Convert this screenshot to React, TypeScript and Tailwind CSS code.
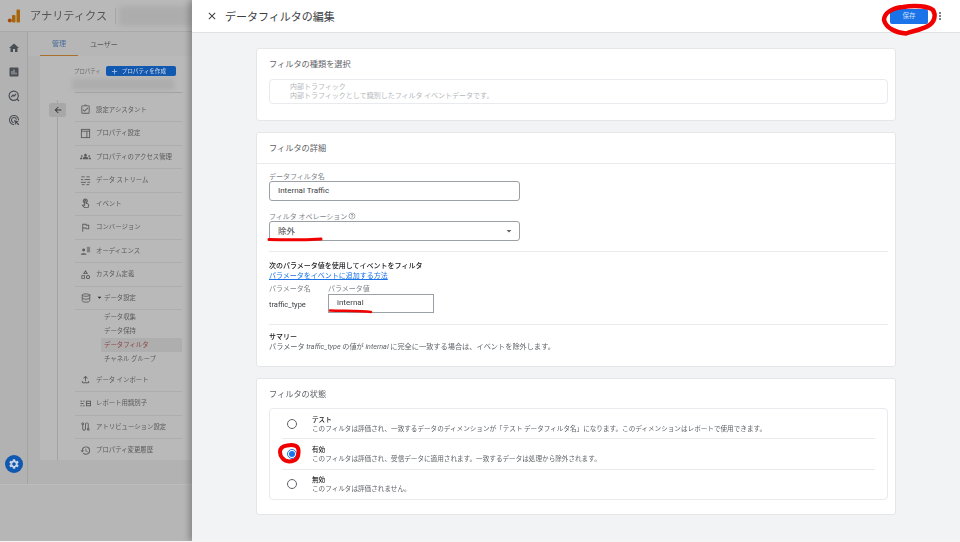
import type { ReactNode } from "react";
import { Database } from "lucide-react";
import {
  MdHome,
  MdInsertChart,
  MdOutlineAdsClick,
  MdOutlineAssignmentTurnedIn,
  MdGroups,
  MdOutlineTouchApp,
  MdOutlineFlag,
  MdOutlineCategory,
  MdOutlineFileUpload,
  MdOutlineRoute,
  MdHistory,
  MdArrowBack,
  MdSettings,
  MdClose,
  MdMoreVert,
  MdArrowDropDown,
  MdAdd,
  MdOutlineHelpOutline,
} from "react-icons/md";

const FONT = "font-['Noto_Sans_CJK_JP','Noto_Sans',sans-serif]";

type IconProps = { size?: number; className?: string };

// the GA nav glyphs that the icon packs don't carry
function SettingsBoxIcon({ size, className }: IconProps) {
  return (
    <svg width={size} height={size} viewBox="0 0 12 12" fill="none" stroke="currentColor" className={className}>
      <rect x="1.5" y="1.5" width="9" height="9" />
      <path d="M1.5 3.5H10.5M7.5 3.5V10.5" />
    </svg>
  );
}

function StreamIcon({ size, className }: IconProps) {
  return (
    <svg width={size} height={size} viewBox="0 0 12 12" fill="none" stroke="currentColor" className={className}>
      <path d="M1.5 2H5M7 2H10.5M1 5H3.5M5 5H11M1 8H6.5M8 8H11M2 10.5H5M7 10.5H10" />
    </svg>
  );
}

function AudienceIcon({ size, className }: IconProps) {
  return (
    <svg width={size} height={size} viewBox="0 0 12 12" fill="currentColor" className={className}>
      <circle cx="4" cy="5.5" r="1.6" />
      <path d="M1 10.5C1 8.5 7 8.5 7 10.5Z" />
      <rect x="7.5" y="2" width="3.5" height="6" opacity="0.6" />
    </svg>
  );
}

function ReportIdIcon({ size, className }: IconProps) {
  return (
    <svg width={size} height={size} viewBox="0 0 12 12" fill="none" stroke="currentColor" className={className}>
      <path d="M0.5 3.5H2.5M3.5 3.5H5M0.5 6H4M0.5 8.5H2M3 8.5H5" />
      <rect x="7" y="3.5" width="4.5" height="5" />
      <path d="M7 6H11.5" />
    </svg>
  );
}

function ExploreIcon({ size, className }: IconProps) {
  return (
    <svg width={size} height={size} viewBox="0 0 12 12" fill="none" stroke="currentColor" strokeWidth="1.2" className={className}>
      <circle cx="5.7" cy="5.7" r="4.6" />
      <path d="M3.2 7L5 5.2L6 6.2L8 4M9 9L11 11" />
    </svg>
  );
}

const topItems = [
  { label: "設定アシスタント", icon: MdOutlineAssignmentTurnedIn },
  { label: "プロパティ設定", icon: SettingsBoxIcon },
  { label: "プロパティのアクセス管理", icon: MdGroups },
  { label: "データ ストリーム", icon: StreamIcon },
  { label: "イベント", icon: MdOutlineTouchApp },
  { label: "コンバージョン", icon: MdOutlineFlag },
  { label: "オーディエンス", icon: AudienceIcon },
  { label: "カスタム定義", icon: MdOutlineCategory },
];

const bottomItems = [
  { label: "データ インポート", icon: MdOutlineFileUpload },
  { label: "レポート用識別子", icon: ReportIdIcon },
  { label: "アトリビューション設定", icon: MdOutlineRoute },
  { label: "プロパティ変更履歴", icon: MdHistory },
];

const subItems = ["データ収集", "データ保持", "データフィルタ", "チャネル グループ"];

const states = [
  {
    title: "テスト",
    desc: "このフィルタは評価され、一致するデータのディメンションが「テスト データフィルタ名」になります。このディメンションはレポートで使用できます。",
  },
  {
    title: "有効",
    desc: "このフィルタは評価され、受信データに適用されます。一致するデータは処理から除外されます。",
    on: true,
  },
  { title: "無効", desc: "このフィルタは評価されません。" },
];

function NavRow({ label, icon: Icon }: { label: string; icon: (p: IconProps) => ReactNode }) {
  return (
    <div className="flex h-[23.5px] shrink-0 items-center border-b border-[#adadad] text-[6.4px] text-[#5a5a5a]">
      <span className="flex w-[21px] justify-center">
        <Icon size={11} className="text-[#5c5c5c]" />
      </span>
      <span>{label}</span>
    </div>
  );
}

function Sidebar() {
  return (
    <div className="flex h-full w-[192px] shrink-0 flex-col bg-[#b6b6b6] blur-[0.35px]">
      <div className="flex h-[32px] shrink-0 items-center border-b border-[#a9a9a9] bg-[#b9b9b9]">
        <svg width="14" height="16" viewBox="0 0 14 16" className="ml-[7px]">
          <rect x="9.5" y="1.5" width="3.5" height="13" rx="1" fill="#a8660c" />
          <rect x="5" y="7" width="3.5" height="7.5" rx="1" fill="#a8660c" />
          <circle cx="2.8" cy="12.6" r="2" fill="#a8480c" />
        </svg>
        <span className="ml-[9px] text-[11.2px] text-[#555]">アナリティクス</span>
        <div className="ml-[8px] h-[16px] w-px bg-[#a5a5a5]" />
        <div className="ml-[3px] h-[20px] flex-1 rounded-l bg-[#adadad] blur-[2px]" />
      </div>

      <div className="flex h-[452px] shrink-0">
        <div className="flex w-[28px] shrink-0 flex-col items-center border-r border-[#a3a3a3] bg-[#b2b2b2] pt-[10px] pb-[11px]">
          <div className="flex flex-col gap-[12px] text-[#4a4f55]">
            <MdHome size={12} />
            <MdInsertChart size={12} />
            <ExploreIcon size={12} />
            <MdOutlineAdsClick size={12} />
          </div>
          <div className="mt-auto flex h-[18px] w-[18px] items-center justify-center rounded-full bg-[#1058b0]">
            <MdSettings size={12} className="text-[#c8d4e4]" />
          </div>
        </div>

        <div className="flex flex-1 flex-col bg-[#b2b2b2]">
          <div className="flex h-[24px] shrink-0 bg-[#b6b6b6] pl-[12px]">
            <div className="flex w-[38px] items-center justify-center border-b border-[#a8702a] text-[7px] text-[#4b6d99]">
              管理
            </div>
            <div className="ml-[12px] flex items-center text-[7px] text-[#555]">ユーザー</div>
          </div>

          <div className="ml-[12px] flex h-[404px] shrink-0 overflow-hidden bg-[#b9b9b9]">
            <div className="relative ml-[9px] flex w-[26px] shrink-0 justify-start pt-[47px]">
              <div className="absolute top-[44px] bottom-0 left-[8px] w-px bg-[#a2a2a2]" />
              <div className="relative flex h-[14px] w-[17px] items-center justify-center rounded-[2px] bg-[#a8a8a8]">
                <MdArrowBack size={10} className="text-[#333]" />
              </div>
            </div>
            <div className="flex flex-1 flex-col pr-[10px]">
              <div className="mb-[5.5px] flex h-[37px] shrink-0 flex-col border-b border-[#a2a2a2]">
                <div className="flex items-center gap-[5px] pt-[10px]">
                  <span className="-ml-px text-[5.4px] text-[#666]">プロパティ</span>
                  <span className="flex h-[10px] w-[70px] items-center gap-[2px] rounded-[2px] bg-[#1058b0] pl-[4px] text-[5.6px] font-medium text-[#bcc9dc]">
                    <MdAdd size={9} />
                    <span className="ml-[1px]">プロパティを作成</span>
                  </span>
                </div>
                <div className="-ml-[3px] mt-[3px] h-[11px] w-[102px] bg-[#adadad] blur-[2px]" />
              </div>
              {topItems.map((item) => (
                <NavRow key={item.label} {...item} />
              ))}
              <div className="flex h-[23.5px] shrink-0 items-center border-b border-[#adadad] text-[6.4px] text-[#5a5a5a]">
                <span className="flex w-[21px] justify-center">
                  <Database size={10} className="text-[#5c5c5c]" />
                </span>
                <MdArrowDropDown size={9} className="-mx-[1px] text-[#222]" />
                <span className="ml-[1px]">データ設定</span>
              </div>
              <div className="flex shrink-0 flex-col pb-[2.5px]">
                {subItems.map((s) => (
                  <div
                    key={s}
                    className={
                      s === "データフィルタ"
                        ? "ml-[26px] flex h-[14px] items-center bg-[#aeaeae] pl-[3px] text-[6.4px] text-[#8f4444]"
                        : "ml-[26px] flex h-[14px] items-center pl-[3px] text-[6.4px] text-[#5a5a5a]"
                    }
                  >
                    {s}
                  </div>
                ))}
              </div>
              {bottomItems.map((item) => (
                <NavRow key={item.label} {...item} />
              ))}
            </div>
          </div>
        </div>
      </div>
      <div className="flex-1 border-t border-[#bcbcbc] bg-[#b6b6b6]" />
    </div>
  );
}

function Card({ title, children, className }: { title: string; children: ReactNode; className: string }) {
  return (
    <section className={`rounded-[3px] border border-[#e4e6e8] bg-white ${className}`}>
      <h2 className="pl-[12px] pt-[8px] text-[8.2px] leading-[13px] text-[#5f6368]">{title}</h2>
      {children}
    </section>
  );
}

function Panel() {
  return (
    <div className="z-10 flex h-full w-[768px] shrink-0 flex-col bg-[#f1f3f4] shadow-[-3px_0_6px_rgba(0,0,0,0.25)]">
      <header className="flex h-[33px] shrink-0 items-center border-b border-[#dfe1e3] bg-white pl-[14px]">
        <MdClose size={12} className="text-[#3c4043]" />
        <h1 className="ml-[7px] text-[11px] text-[#3c4043]">データフィルタの編集</h1>
        <button className="ml-auto h-[15px] w-[38px] rounded-[2px] bg-[#1a73e8] text-[6.5px] text-[#cfe0f8]">保存</button>
        <MdMoreVert size={12} className="ml-[6px] mr-[14px] text-[#5f6368]" />
      </header>

      <div className="flex flex-col gap-[11px] pl-[64px] pt-[15px] blur-[0.25px]">
        <Card title="フィルタの種類を選択" className="h-[73px] w-[640px]">
          <div className="ml-[12px] mt-[9px] h-[25px] w-[619px] rounded-[4px] border border-[#e8eaed] pl-[20px] pt-[1.5px] text-[7px] leading-[9px] text-[#b4b7ba]">
            <div>内部トラフィック</div>
            <div>内部トラフィックとして識別したフィルタ イベントデータです。</div>
          </div>
        </Card>

        <Card title="フィルタの詳細" className="h-[235px] w-[640px]">
          <div className="mt-[9px] border-t border-[#e8eaed] px-[12px] pt-[7px]">
            <div className="text-[7px] leading-[10px] text-[#80868b]">データフィルタ名</div>
            <div className="-mt-[0.5px] flex h-[20px] w-[251px] items-center rounded-[3px] border border-[#9aa0a6] pl-[8px] font-['Roboto',sans-serif] text-[8px] text-[#3c4043]">
              Internal Traffic
            </div>
            <div className="mt-[10.5px] flex items-center gap-px text-[7px] leading-[10px] text-[#80868b]">
              フィルタ オペレーション
              <MdOutlineHelpOutline size={8} />
            </div>
            <div className="-mt-[0.5px] flex h-[20px] w-[251px] items-center justify-between rounded-[3px] border border-[#9aa0a6] pl-[8px] pr-[4px] text-[8.5px] text-[#3c4043]">
              除外
              <MdArrowDropDown size={12} className="text-[#5f6368]" />
            </div>
            <div className="mt-[10px] w-[619px] border-t border-[#e8eaed] pt-[8px]">
              <div className="text-[7px] font-medium leading-[10px] text-[#202124]">次のパラメータ値を使用してイベントをフィルタ</div>
              <div className="text-[7px] leading-[10px] text-[#1a73e8] underline">パラメータをイベントに追加する方法</div>
              <div className="mt-[3px] flex text-[7px] leading-[10px] text-[#80868b]">
                <span className="w-[59px]">パラメータ名</span>
                <span>パラメータ値</span>
              </div>
              <div className="mt-px flex h-[19px] items-center">
                <span className="w-[59px] pt-[3px] font-['Roboto',sans-serif] text-[7.5px] text-[#3c4043]">traffic_type</span>
                <div className="flex h-[19px] w-[106px] items-center border border-[#9aa0a6] pb-[1px] pl-[8px] font-['Roboto',sans-serif] text-[8px] text-[#3c4043]">
                  internal
                </div>
              </div>
              <div className="mt-[11px] border-t border-[#e8eaed] pt-[6px]">
                <div className="text-[7px] font-medium leading-[10px] text-[#202124]">サマリー</div>
                <div className="text-[7.2px] leading-[10px] text-[#5f6368]">
                  パラメータ <i className="font-['Roboto',sans-serif]">traffic_type</i> の値が <i className="font-['Roboto',sans-serif]">internal</i> に完全に一致する場合は、イベントを除外します。
                </div>
              </div>
            </div>
          </div>
        </Card>

        <Card title="フィルタの状態" className="h-[137px] w-[640px]">
          <div className="mx-[12px] mt-[8px] flex h-[92px] w-[619px] flex-col rounded-[4px] border border-[#e8eaed] px-[12px]">
            {states.map((s, i) => (
              <div key={s.title} className={i < 2 ? "flex flex-1 items-center border-b border-[#e8eaed]" : "flex flex-1 items-center"}>
                <div className="flex w-[20px] justify-center">
                  <span
                    className={
                      s.on
                        ? "flex h-[10px] w-[10px] items-center justify-center rounded-full border border-[#1a73e8]"
                        : "h-[10px] w-[10px] rounded-full border border-[#5f6368]"
                    }
                  >
                    {s.on && <span className="h-[6px] w-[6px] rounded-full bg-[#1a73e8]" />}
                  </span>
                </div>
                <div className="pl-[10px]">
                  <div className="text-[6.6px] font-medium leading-[9px] text-[#202124]">{s.title}</div>
                  <div className="text-[6.6px] leading-[9px] text-[#5f6368]">{s.desc}</div>
                </div>
              </div>
            ))}
          </div>
        </Card>
      </div>
    </div>
  );
}

export default function App() {
  return (
    <div className={`relative flex h-[542px] w-[960px] overflow-hidden border-b border-[#f4f4f4] bg-white ${FONT}`}>
      <Sidebar />
      <Panel />
      {/* hand drawn red marks on top of the screenshot */}
      <svg width="960" height="542" className="pointer-events-none absolute left-0 top-0 z-20" fill="none" stroke="#f00000" strokeLinecap="round" strokeLinejoin="round">
        <path d="M903 7 C915 5 928 6 933 10 C936 15 935 22 928 26 C921 30 912 31 906 33.5 C896 33 886 28 884 20 C884 13 892 8 903 7 Z" strokeWidth="4.5" />
        <path d="M269 239.5 C285 240 305 240 321 239" strokeWidth="3" />
        <path d="M330 310.5 C345 311 360 311 371 312" strokeWidth="2.5" />
        <path d="M287 445.5 C294 444 298 446 298.5 450 C299 458 296 461.5 289 461.5 C283 461 280 456 280 452 C280 448 283 446 287 445.5 Z" strokeWidth="4" />
      </svg>
    </div>
  );
}
